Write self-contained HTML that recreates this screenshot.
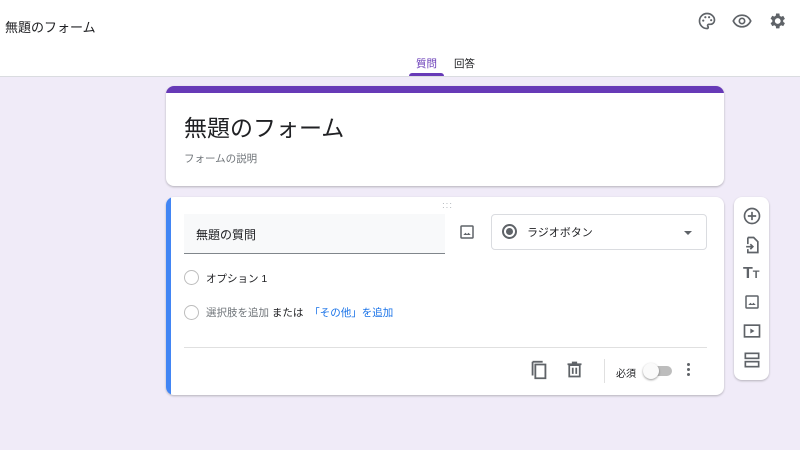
<!DOCTYPE html>
<html><head><meta charset="utf-8"><style>
*{margin:0;padding:0;box-sizing:border-box}
body{width:800px;height:450px;overflow:hidden;background:#f0ebf8;font-family:"Liberation Sans","Noto Sans CJK JP",sans-serif;color:#202124;position:relative}
.hdr{position:absolute;left:0;top:0;width:800px;height:77px;background:#fff;border-bottom:1px solid #dadce0}
.abs{position:absolute}
.card{position:absolute;background:#fff;border-radius:8px;box-shadow:0 1px 2px rgba(0,0,0,.25)}
svg{position:absolute}
</style></head><body>
<div class="hdr">
 <div class="abs" style="left:5px;top:17px;font-size:13px">無題のフォーム</div>
 <svg style="left:697px;top:11px" width="20" height="20" viewBox="0 0 24 24"><path fill="none" stroke="#5f6368" stroke-width="2" d="M12 3a9 9 0 0 0 0 18c1 0 1.5-.7 1.5-1.5 0-.4-.2-.7-.4-1-.2-.3-.4-.6-.4-1 0-.8.7-1.5 1.5-1.5H16a5 5 0 0 0 5-5c0-4.4-4-8-9-8z"/><circle cx="7.5" cy="11.5" r="1.3" fill="#5f6368"/><circle cx="10" cy="7.5" r="1.3" fill="#5f6368"/><circle cx="14.5" cy="7.5" r="1.3" fill="#5f6368"/><circle cx="17" cy="11" r="1.3" fill="#5f6368"/></svg>
 <svg style="left:732px;top:11px" width="20" height="20" viewBox="0 0 24 24"><path fill="none" stroke="#5f6368" stroke-width="2" d="M1.5 12C4 7 8 5 12 5s8 2 10.5 7C20 17 16 19 12 19S4 17 1.5 12z"/><circle cx="12" cy="12" r="3.2" fill="none" stroke="#5f6368" stroke-width="2"/></svg>
 <svg style="left:767px;top:11px" width="20" height="20" viewBox="0 0 24 24"><path fill="#5f6368" d="M19.4 13a7.5 7.5 0 0 0 0-2l2.1-1.6-2-3.5-2.5 1a7 7 0 0 0-1.7-1L14.9 3h-4l-.4 2.7a7 7 0 0 0-1.7 1l-2.5-1-2 3.5L6.4 11a7.5 7.5 0 0 0 0 2l-2.1 1.6 2 3.5 2.5-1a7 7 0 0 0 1.7 1l.4 2.7h4l.4-2.7a7 7 0 0 0 1.7-1l2.5 1 2-3.5zM12.9 15.5a3.5 3.5 0 1 1 0-7 3.5 3.5 0 0 1 0 7z"/></svg>
 <div class="abs" style="left:416px;top:56px;font-size:10.5px;color:#673ab7">質問</div>
 <div class="abs" style="left:454px;top:56px;font-size:10.5px;color:#202124">回答</div>
 <div class="abs" style="left:409px;top:73px;width:35px;height:3px;background:#673ab7;border-radius:3px 3px 0 0"></div>
</div>
<div class="card" style="left:166px;top:86px;width:558px;height:100px;overflow:hidden">
 <div class="abs" style="left:0;top:0;width:558px;height:7px;background:#673ab7"></div>
 <div class="abs" style="left:18px;top:23px;font-size:23px">無題のフォーム</div>
 <div class="abs" style="left:18px;top:65px;font-size:10.5px;color:#70757a">フォームの説明</div>
</div>
<div class="card" style="left:166px;top:197px;width:558px;height:198px;overflow:hidden">
 <div class="abs" style="left:0;top:0;width:5px;height:198px;background:#4285f4"></div>
 <div class="abs" style="left:276px;top:5px;font-size:8px;color:#9aa0a6;letter-spacing:1px;line-height:4px">···<br>···</div>
 <div class="abs" style="left:18px;top:17px;width:261px;height:40px;background:#f8f9fa;border-bottom:1px solid #80868b"></div>
 <div class="abs" style="left:30px;top:29px;font-size:12px">無題の質問</div>
 <svg style="left:292px;top:26px" width="18" height="18" viewBox="0 0 24 24"><rect x="4" y="4" width="16" height="16" rx="1" fill="none" stroke="#5f6368" stroke-width="2"/><path d="M7 16l3-3 2 2 2-2 3 3z" fill="#5f6368"/></svg>
 <div class="abs" style="left:325px;top:17px;width:216px;height:36px;border:1px solid #dadce0;border-radius:4px"></div>
 <div class="abs" style="left:336px;top:27px;width:15px;height:15px;border:2px solid #5f6368;border-radius:50%"></div>
 <div class="abs" style="left:340px;top:31px;width:7px;height:7px;background:#5f6368;border-radius:50%"></div>
 <div class="abs" style="left:361px;top:27px;font-size:11px">ラジオボタン</div>
 <div class="abs" style="left:518px;top:34px;border:4px solid transparent;border-top:4px solid #5f6368"></div>
 <div class="abs" style="left:18px;top:73px;width:15px;height:15px;border:1.5px solid #bdbdbd;border-radius:50%"></div>
 <div class="abs" style="left:40px;top:74px;font-size:10.5px">オプション 1</div>
 <div class="abs" style="left:18px;top:108px;width:15px;height:15px;border:1.5px solid #bdbdbd;border-radius:50%"></div>
 <div class="abs" style="left:40px;top:108px;font-size:10.5px;white-space:nowrap"><span style="color:#70757a">選択肢を追加</span> または &nbsp;<span style="color:#1a73e8">「その他」を追加</span></div>
 <div class="abs" style="left:18px;top:150px;width:523px;height:1px;background:#e0e0e0"></div>
 <svg style="left:362px;top:162px" width="22" height="22" viewBox="0 0 24 24"><path fill="none" stroke="#5f6368" stroke-width="2" d="M8 6h11v15H8zM5 3v15"/><path fill="none" stroke="#5f6368" stroke-width="2" d="M5 3h11"/></svg>
 <svg style="left:398px;top:162px" width="21" height="21" viewBox="0 0 24 24"><path fill="none" stroke="#5f6368" stroke-width="2" d="M6 7h12v13H6zM4 6h16M9 4h6M10 10v7M14 10v7"/></svg>
 <div class="abs" style="left:438px;top:162px;width:1px;height:24px;background:#e0e0e0"></div>
 <div class="abs" style="left:450px;top:168px;font-size:10px;color:#202124">必須</div>
 <div class="abs" style="left:482px;top:169px;width:24px;height:10px;background:#bdbdbd;border-radius:5px"></div>
 <div class="abs" style="left:477px;top:166px;width:16px;height:16px;background:#fafafa;border-radius:50%;box-shadow:0 1px 2px rgba(0,0,0,.4)"></div>
 <div class="abs" style="left:521px;top:166px;width:3px;height:3px;background:#5f6368;border-radius:50%;box-shadow:0 5px 0 #5f6368,0 10px 0 #5f6368"></div>
</div>
<div class="card" style="left:734px;top:197px;width:35px;height:183px">
 <svg style="left:8px;top:9px" width="20" height="20" viewBox="0 0 24 24"><circle cx="12" cy="12" r="9" fill="none" stroke="#5f6368" stroke-width="2"/><path d="M12 7v10M7 12h10" stroke="#5f6368" stroke-width="2"/></svg>
 <svg style="left:8px;top:38px" width="20" height="20" viewBox="0 0 24 24"><path fill="none" stroke="#5f6368" stroke-width="2" d="M7 3h7l5 5v13H7v-4M7 11V3"/><path fill="none" stroke="#5f6368" stroke-width="2" d="M5 14h8M10 11l3 3-3 3"/></svg>
 <div class="abs" style="left:9px;top:68px;font-size:16px;font-weight:bold;color:#5f6368">T<span style="font-size:11px">T</span></div>
 <svg style="left:9px;top:96px" width="18" height="18" viewBox="0 0 24 24"><rect x="4" y="4" width="16" height="16" rx="1" fill="none" stroke="#5f6368" stroke-width="2"/><path d="M7 16l3-3 2 2 2-2 3 3z" fill="#5f6368"/></svg>
 <svg style="left:8px;top:124px" width="20" height="20" viewBox="0 0 24 24"><rect x="3" y="5" width="18" height="14" fill="none" stroke="#5f6368" stroke-width="2"/><path d="M10 9v6l5-3z" fill="#5f6368"/></svg>
 <svg style="left:8px;top:153px" width="20" height="20" viewBox="0 0 24 24"><rect x="4" y="4" width="16" height="6" fill="none" stroke="#5f6368" stroke-width="2"/><rect x="4" y="14" width="16" height="6" fill="none" stroke="#5f6368" stroke-width="2"/></svg>
</div>
</body></html>
